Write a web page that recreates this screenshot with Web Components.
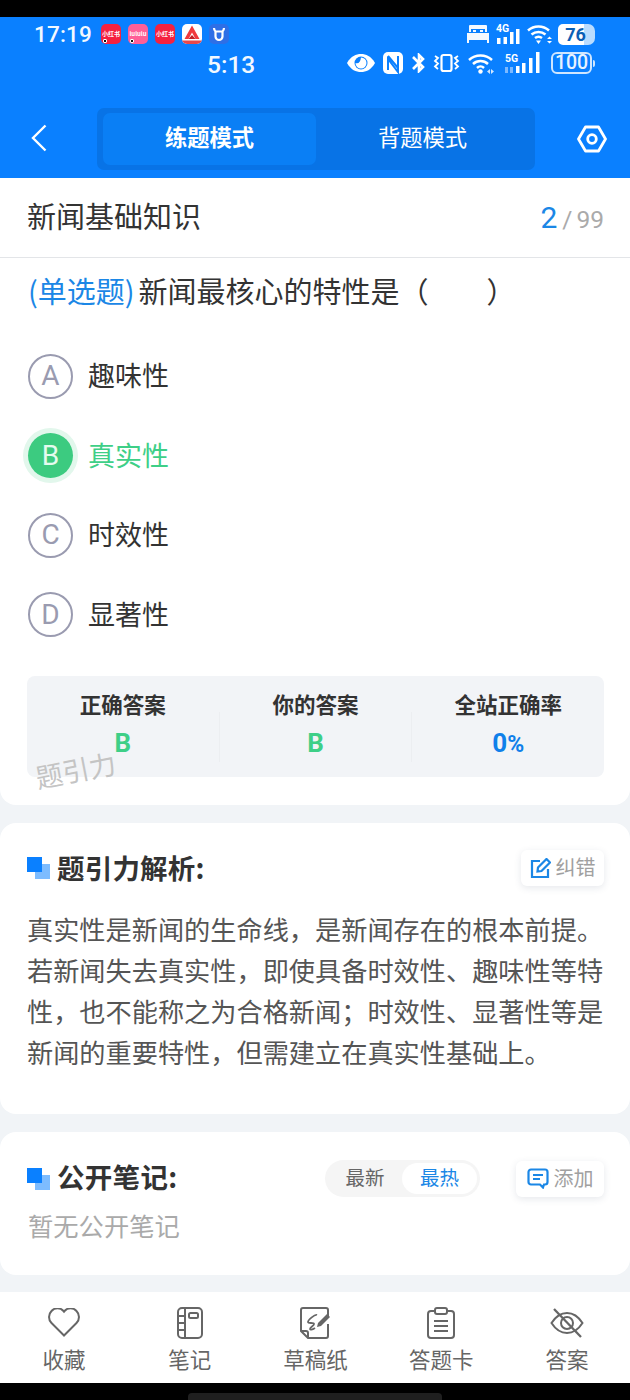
<!DOCTYPE html>
<html lang="zh"><head><meta charset="utf-8"><title>新闻基础知识</title>
<style>
html,body{margin:0;padding:0;background:#f1f4f7}
body{width:630px;height:1400px;overflow:hidden;font-family:"Noto Sans CJK SC","Noto Sans",sans-serif;color:#333}
x-page{display:flex;flex-direction:column;height:1400px}
</style></head><body>
<x-page>
  <x-status-header></x-status-header>
  <x-question-card></x-question-card>
  <x-analysis-card></x-analysis-card>
  <x-notes-card></x-notes-card>
  <x-tabbar></x-tabbar>
</x-page>
<script>
function comp(name, html){
  customElements.define(name, class extends HTMLElement{
    constructor(){super();this.attachShadow({mode:'open'}).innerHTML=html;}
  });
}
const H2MARK=`<svg width="24" height="24" viewBox="0 0 24 24" style="flex:none;margin-left:-1px"><rect x="8" y="8" width="15" height="15" fill="#7dbcff"/><rect x="0" y="1" width="15" height="15" fill="#0a80ff"/></svg>`;

comp('x-app-icon',`<style>
:host{display:flex;width:20px;height:20px;border-radius:5px;align-items:center;justify-content:center;overflow:hidden;position:relative;background:var(--bg,#f5213f);color:#fff;font:700 6px/1 "Noto Sans CJK SC",sans-serif;white-space:nowrap}
i{position:absolute;left:2px;bottom:1px;width:4px;height:4px;background:#111;border:1px solid #fff;box-sizing:border-box;border-radius:1px;display:var(--dot,none)}
</style><slot></slot><i></i>`);

comp('x-status-header',`<style>
:host{display:block;flex:none;height:178px;background:linear-gradient(#000 0,#000 17px,#0a80ff 17px);color:#fff;box-sizing:border-box;padding-top:17px;font-family:Roboto,sans-serif}
.r1{height:34px;display:flex;align-items:center;padding:0 35px}
.t1{font-size:22.500px;font-weight:500;width:66px;letter-spacing:.2px;margin-left:-1px;margin-right:1px;opacity:.95}
.apps{display:flex;gap:7px}
.right{margin-left:auto;display:flex;align-items:center}
.r2{height:24px;display:flex;align-items:center;padding:0 35px 0 207px}
.t2{font-size:24.500px;font-weight:500;opacity:.95;position:relative;top:1px}
svg{display:block;flex:none}
.bat1{width:37px;height:21px;background:linear-gradient(90deg,#fff 0 26px,#b9dcff 26px 100%);border-radius:5px 7px 7px 5px;color:#0b5fb5;font:700 18px/21px Roboto,sans-serif;text-align:center;box-sizing:border-box;padding-right:2px;margin-left:5px}
.bat2{width:41px;height:22px;border:2px solid #cfe6ff;border-radius:6px;box-sizing:border-box;font:500 19.500px/18px Roboto,sans-serif;text-align:center;color:#e8f3ff}
.nub{width:2px;height:7px;background:#cfe6ff;margin-left:1px;border-radius:0 2px 2px 0}
nav{display:flex;align-items:center;margin-top:33px;height:62px}
.back{width:97px;display:flex;padding-left:31px;box-sizing:border-box;position:relative;top:-1px}
.seg{width:438px;height:62px;box-sizing:border-box;background:#0873e6;border-radius:7px;padding:5px 6px;display:grid;grid-template-columns:213px 1fr;font:400 22.300px/46px "Noto Sans CJK SC",sans-serif;text-align:center}
.seg .a{background:#0a7ff5;border-radius:7px;font-weight:700}
.gear{flex:1;display:flex;justify-content:center;padding-left:19px}
</style>
<div class="r1"><span class="t1">17:19</span>
 <div class="apps">
  <x-app-icon style="--dot:block">小红书</x-app-icon>
  <x-app-icon style="--bg:#ff5f97;--dot:block">lululu</x-app-icon>
  <x-app-icon>小红书</x-app-icon>
  <svg width="20" height="20" viewBox="0 0 20 20"><rect width="20" height="20" rx="5" fill="#fff"/><path d="M10 1.500L2.500 15h4L10 8.500 13.500 15h4z" fill="#f0393c"/><path d="M6.500 15l3.500-4 3.500 4z" fill="#c21f25"/><path d="M0 16.500h20V15a5 5 0 01-5 5H5a5 5 0 01-5-5z" fill="#e8484b"/></svg>
  <svg width="20" height="20" viewBox="0 0 20 20"><rect width="20" height="20" rx="5" fill="#2e6fe6"/><path d="M5 4c0 2 .8 2.800 1.500 3.500v5a3.500 3.500 0 007 0v-5C14.200 6.800 15 6 15 4M6.500 7.500h7" fill="none" stroke="#fff" stroke-width="2.200"/></svg>
 </div>
 <div class="right">
  <svg width="22" height="18" viewBox="0 0 22 18" fill="#f4f9ff"><path d="M3 0h16a1 1 0 011 1v6h-2V4H4v3H2V1a1 1 0 011-1zM6 5h3v2H6zM13 5h3v2h-3zM0 8h22v10h-2v-3H2v3H0z"/></svg>
  <svg style="margin-left:6px" width="25" height="22" viewBox="0 0 25 22" fill="#fff"><text x="1" y="9" font-family="Roboto" font-weight="700" font-size="10.500">4G</text><rect x="2" y="15" width="3.500" height="6"/><rect x="8.500" y="14" width="3.500" height="7"/><rect x="15" y="9" width="3.500" height="12"/><rect x="21" y="6" width="3.500" height="15"/></svg>
  <svg style="margin-left:7px" width="26" height="21" viewBox="0 0 26 21" fill="none" stroke="#fff" stroke-width="2.600"><path d="M1 6.500a16 16 0 0121 0M4.500 10.500a11 11 0 0114 0M8 14a6 6 0 017 0"/><path d="M9 16.500l2.500 3.500 2.500-3.500z" fill="#fff" stroke="none"/><path d="M20 15l2.500-2.500 2.500 2.500zM20 17l2.500 2.500 2.500-2.500z" fill="#fff" stroke="none"/></svg>
  <div class="bat1">76</div>
 </div>
</div>
<div class="r2"><span class="t2">5:13</span>
 <div class="right">
  <svg width="28" height="20" viewBox="0 0 28 20"><path d="M0 10C4 3 9 1 14 1s10 2 14 9c-4 7-9 9-14 9S4 17 0 10z" fill="#fff"/><circle cx="14" cy="10" r="6.500" fill="#0a80ff"/><path d="M14 4.500a5.500 5.500 0 11-5.500 5.500c3 1 5-1 5.500-5.500z" fill="#fff"/></svg>
  <svg style="margin-left:8px" width="20" height="22" viewBox="0 0 20 22"><rect width="20" height="22" rx="5" fill="#fff"/><path d="M5 18V7l10 13V4M5 4l10 12" fill="none" stroke="#0a80ff" stroke-width="2"/></svg>
  <svg style="margin-left:9px" width="13" height="20" viewBox="0 0 13 20" fill="none" stroke="#fff" stroke-width="2.600"><path d="M1 4l10 10-4 4V8M7 12V2l4 4-10 10"/></svg>
  <svg style="margin-left:8px" width="27" height="20" viewBox="0 0 27 20" fill="none" stroke="#fff" stroke-width="2.200"><rect x="8.500" y="2" width="10" height="16" rx="2"/><path d="M2 3l3 2-3 3 3 2.500-3 3 3 2.500M25 3l-3 2 3 3-3 2.500 3 3-3 2.500" stroke-width="1.800"/></svg>
  <svg style="margin-left:8px" width="27" height="21" viewBox="0 0 27 21" fill="none" stroke="#fff" stroke-width="2.500"><path d="M1 7a17 17 0 0123 0M5 11a11 11 0 0115 0M9 15a5 5 0 017 0"/><circle cx="12.500" cy="18.500" r="2.200" fill="#fff" stroke="none"/><path d="M22 16l-3 2.500 3 2.500zM23 16l3 2.500-3 2.500z" fill="#cfe6ff" stroke="none"/></svg>
  <svg style="margin-left:8px" width="39" height="22" viewBox="0 0 39 22" fill="#fff"><text x="2" y="10" font-family="Roboto" font-weight="700" font-size="10.500">5G</text><path d="M2 15h3v6H2zM7 15h3v6H7z" fill="#7cb9ff"/><rect x="13" y="14" width="3.500" height="7"/><rect x="19" y="11" width="3.500" height="10"/><rect x="26" y="6" width="3.500" height="15"/><rect x="33" y="0" width="3.500" height="21"/></svg>
  <div class="bat2" style="margin-left:9px">100</div><div class="nub"></div>
 </div>
</div>
<nav>
 <div class="back"><svg width="16" height="28" viewBox="0 0 16 28" fill="none" stroke="#fff" stroke-width="2.400"><path d="M14.500 1.500L2 14l12.500 12.500"/></svg></div>
 <div class="seg"><div class="a">练题模式</div><div>背题模式</div></div>
 <div class="gear"><svg width="30" height="28" viewBox="0 0 30 28" fill="none" stroke="#fff" stroke-width="2.800" stroke-linejoin="round"><path d="M8.500 2h13L28.500 14l-7 12h-13L1.500 14z"/><circle cx="15" cy="14" r="4.300"/></svg></div>
</nav>`);

comp('x-option',`<style>
:host{display:flex;align-items:center;height:79.500px;gap:15px;font:400 27px/1 "Noto Sans CJK SC",sans-serif;color:#333}
.c{width:45px;height:45px;border-radius:50%;border:2px solid #9a9bb0;box-sizing:border-box;display:flex;align-items:center;justify-content:center;font:400 28px/1 Roboto,sans-serif;color:#9a9bb0;flex:none}
.t{padding-bottom:3px}
:host([ok]){color:#3ecf87}
:host([ok]) .c{background:#3ccb80;border:0;color:#e4fbef;box-shadow:0 0 0 5px #e2f7ec}
</style><div class="c"><slot name="k"></slot></div><span class="t"><slot></slot></span>`);

comp('x-stat',`<style>
:host{display:flex;flex-direction:column;align-items:center;flex:1;padding-top:13px;font:700 21.500px/30px "Noto Sans CJK SC",sans-serif;color:#333}
.v{font:700 26px/30px Roboto,sans-serif;margin-top:9px;color:var(--c,#3ecf87)}
</style><slot></slot><div class="v"><slot name="v"></slot></div>`);

comp('x-question-card',`<style>
:host{display:block;flex:none;height:627px;background:#fff;border-radius:0 0 16px 16px;position:relative;box-sizing:border-box}
.title{height:79px;box-sizing:content-box;border-bottom:1px solid #e3e5e8;display:flex;align-items:center;justify-content:space-between;padding:0 26px 0 27px;font-size:29px;color:#333}
.title>span:first-child{padding-bottom:5px}
.n{font:400 24.500px/1 Roboto,sans-serif;color:#aaa}
.n b{font:400 30px/1 Roboto,sans-serif;color:#1b87e6;margin-right:5px}
.q{height:64px;padding:0 28px 6px;display:flex;align-items:center;font-size:29px;white-space:nowrap;box-sizing:content-box}
.q em{font-style:normal;color:#1b87e6;margin-right:4px}
.opts{padding:8.500px 27px 0 28px;height:317.500px;}
.stats{margin:22px 26px 0 27px;height:101px;border-radius:8px;background:#f2f4f7;display:flex}
.sep{width:1px;background:#eceef1;height:50px;margin-top:36px;flex:none}
.wm{position:absolute;left:35px;top:578px;font:400 27px/1 "Noto Sans CJK SC",sans-serif;color:#c4c4c4;transform:rotate(-11deg)}
</style>
<div class="title"><span>新闻基础知识</span><span class="n"><b>2</b>/<span style="margin-left:4px">99</span></span></div>
<div class="q"><em>(单选题)</em>新闻最核心的特性是（　　）</div>
<div class="opts">
<x-option><span slot="k">A</span>趣味性</x-option>
<x-option ok><span slot="k">B</span>真实性</x-option>
<x-option><span slot="k">C</span>时效性</x-option>
<x-option><span slot="k">D</span>显著性</x-option>
</div>
<div class="stats">
<x-stat>正确答案<span slot="v">B</span></x-stat><div class="sep"></div>
<x-stat>你的答案<span slot="v">B</span></x-stat><div class="sep"></div>
<x-stat style="--c:#0f80ea">全站正确率<span slot="v">0<small style="font-size:23px">%</small></span></x-stat>
</div>
<div class="wm">题引力</div>`);

comp('x-chip',`<style>
:host{display:inline-flex;align-items:center;justify-content:center;gap:5px;height:36px;box-sizing:border-box;padding:0 8px;background:#fff;border-radius:6px;box-shadow:0 2px 7px rgba(60,80,110,.13);font:400 20px/1 "Noto Sans CJK SC",sans-serif;color:#a0a0a0}
span{padding-bottom:2px}
::slotted(svg){display:block}
</style><slot name="i"></slot><span><slot></slot></span>`);

comp('x-analysis-card',`<style>
:host{display:block;flex:none;height:291px;margin-top:18px;background:#fff;border-radius:16px;box-sizing:border-box;padding:27px 26px 0 28px}
.h{display:flex;align-items:center;height:36px}
h2{margin:0 0 0 6px;font:700 27.500px/34px "Noto Sans CJK SC",sans-serif;color:#333;letter-spacing:.2px;padding-bottom:2px}
x-chip{margin-left:auto;width:83px}
p{margin:23px 0 0 -1px;font:400 26.200px/41px "Noto Sans CJK SC",sans-serif;color:#555;width:577px}
</style>
<div class="h">${H2MARK}<h2>题引力解析:</h2>
<x-chip><svg slot="i" width="21" height="21" viewBox="0 0 21 21" fill="none" stroke="#1b87e6" stroke-width="2.200"><path d="M10 3H2v16h16v-8"/><path d="M7.500 13.500l.5-4L16.500 1l3.500 3.500L11.500 13z"/></svg>纠错</x-chip></div>
<p>真实性是新闻的生命线，是新闻存在的根本前提。若新闻失去真实性，即使具备时效性、趣味性等特性，也不能称之为合格新闻；时效性、显著性等是新闻的重要特性，但需建立在真实性基础上。</p>`);

comp('x-notes-card',`<style>
:host{display:block;flex:none;height:143px;margin-top:18px;background:#fff;border-radius:16px;box-sizing:border-box;padding:28px 26px 0 28px}
.h{display:flex;align-items:center;height:37px}
h2{margin:0 0 0 6px;font:700 27.500px/33px "Noto Sans CJK SC",sans-serif;color:#333;letter-spacing:.3px;padding-bottom:4px}
.seg{margin-left:auto;width:155px;height:37px;box-sizing:border-box;padding:3px;border-radius:19px;background:#f5f5f5;display:grid;grid-template-columns:1fr 75px;font:400 19.500px/28px "Noto Sans CJK SC",sans-serif;color:#666;text-align:center}
.seg .a{background:#fff;border-radius:16px;color:#1b87e6}
x-chip{margin-left:36px;width:88px}
p{margin:10px 0 0;font:400 25.300px/36px "Noto Sans CJK SC",sans-serif;color:#aaa}
</style>
<div class="h">${H2MARK}<h2>公开笔记:</h2>
<div class="seg"><div>最新</div><div class="a">最热</div></div>
<x-chip><svg slot="i" width="22" height="21" viewBox="0 0 22 21" fill="none" stroke="#1b87e6" stroke-width="2.200"><path d="M4 1.500h14a2.500 2.500 0 012.500 2.500v10a2.500 2.500 0 01-2.500 2.500h-1l-1 3-3-3H4A2.500 2.500 0 011.500 14V4A2.500 2.500 0 014 1.500z"/><path d="M6 7h10M6 11h7"/></svg>添加</x-chip></div>
<p>暂无公开笔记</p>`);

comp('x-tab',`<style>
:host{display:flex;flex-direction:column;align-items:center;flex:1;font:400 21.500px/26px "Noto Sans CJK SC",sans-serif;color:#666;padding-top:13px}
.i{height:35px;display:flex;align-items:center;justify-content:center;margin-bottom:6px}
::slotted(svg){display:block}
</style><div class="i"><slot name="i"></slot></div><slot></slot>`);

comp('x-tabbar',`<style>
:host{display:block;flex:none;margin-top:17px;background:#000;height:108px}
.b{height:91px;background:#fff;display:flex;padding-left:1px}
.h{height:17px;display:flex;justify-content:center;align-items:flex-end}
.h i{width:254px;height:7px;background:#1f1f1f;border-radius:4px 4px 0 0}
</style>
<div class="b">
<x-tab><svg slot="i" width="32" height="29" viewBox="0 0 32 29" fill="none" stroke="#666" stroke-width="2"><path d="M16 27.500L3.500 15a8.500 8.500 0 010-12 8 8 0 0112 0l.5.600.5-.6a8 8 0 0112 0 8.500 8.500 0 010 12z"/></svg>收藏</x-tab>
<x-tab><svg slot="i" width="26" height="32" viewBox="0 0 26 32" fill="none" stroke="#666" stroke-width="2"><rect x="1" y="1" width="24" height="30" rx="4"/><path d="M8 1v30M1 9h7M1 16h7M1 23h7"/><rect x="12" y="6" width="9" height="5" rx="1.500"/></svg>笔记</x-tab>
<x-tab><svg slot="i" width="30" height="32" viewBox="0 0 30 32" fill="none" stroke="#666" stroke-width="2"><path d="M28 9V3a2 2 0 00-2-2H3a2 2 0 00-2 2v21l7 7h18a2 2 0 002-2V17"/><path d="M1 24h5a2 2 0 012 2v5"/><path d="M17 8c-2-1-9 5-9 7 0 2 6 0 6 2 0 2-4 3-4 5 0 1 2 1 5-1" stroke-width="1.800"/><path d="M17 20l1-4 9-9 3 3-9 9z" fill="#666" stroke="none"/></svg>草稿纸</x-tab>
<x-tab><svg slot="i" width="28" height="32" viewBox="0 0 28 32" fill="none" stroke="#666" stroke-width="2"><path d="M7 4H4a3 3 0 00-3 3v21a3 3 0 003 3h20a3 3 0 003-3V7a3 3 0 00-3-3h-3"/><rect x="8" y="1" width="12" height="6" rx="2"/><path d="M7 14h14M7 19h14M7 24h14"/></svg>答题卡</x-tab>
<x-tab><svg slot="i" width="34" height="30" viewBox="0 0 34 30" fill="none" stroke="#666" stroke-width="2"><path d="M1.500 15C6 8 11 5 17 5s11 3 15.500 10C28 22 23 25 17 25S6 22 1.500 15z"/><circle cx="17" cy="15" r="6"/><path d="M4 1l27 28" stroke-width="2.300"/></svg>答案</x-tab>
</div>
<div class="h"><i></i></div>`);
</script>
</body></html>
